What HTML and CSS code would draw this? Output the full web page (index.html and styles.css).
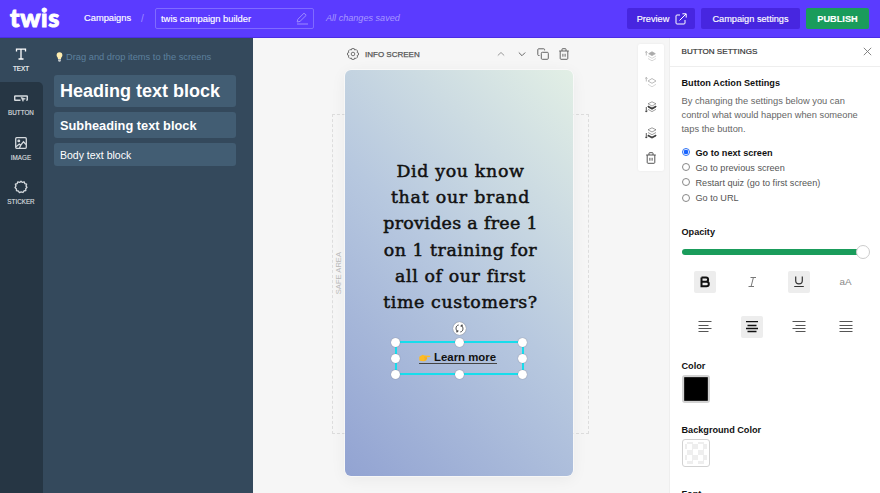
FILE: index.html
```
<!DOCTYPE html>
<html lang="en">
<head>
<meta charset="utf-8">
<title>twis campaign builder</title>
<link rel="stylesheet" href="styles.css">
</head>
<body>
<header class="topbar">
  <div class="logo">twis</div>
  <a class="crumb">Campaigns</a>
  <span class="slash">/</span>
  <div class="name-field"><span>twis campaign builder</span>
    <svg width="12" height="13" viewBox="0 0 12 13" fill="none" stroke="currentColor"><path d="M1.2 10 1.8 7.3 8 1.2 10.2 3.3 4 9.4ZM1 12H12"/></svg>
  </div>
  <em class="saved">All changes saved</em>
  <div class="actions">
    <button class="btn preview">Preview
      <svg width="12" height="12" viewBox="0 0 12 12" fill="none" stroke="currentColor"><path d="M5 2H2Q1 2 1 3V10Q1 11 2 11H9Q10 11 10 10V7M4.5 7.5 11 1M7.4.8H11.2V4.6"/></svg>
    </button>
    <button class="btn campaign">Campaign settings</button>
    <button class="btn publish">PUBLISH</button>
  </div>
</header>
<main class="workspace">
  <nav class="rail">
    <a class="tab active"><svg width="14" height="14" viewBox="0 0 14 14" fill="none" stroke="currentColor" stroke-width="1.3"><path d="M2.5 4.5V2.2H11.5V4.5M7 2.2V12M4.5 12H9.5"/></svg><span>TEXT</span></a>
    <a class="tab"><svg width="14" height="14" viewBox="0 0 14 14" fill="none" stroke="currentColor" stroke-width="1.5"><path d="M6.5 9.2H1.2Q.7 9.2.7 8.7V5.5Q.7 5 1.2 5H12.8Q13.3 5 13.3 5.5V8.7Q13.3 9.2 12.3 9.2"/><path d="M7 6.2 11.4 7.8 9.6 8.5 9 10.4Z" fill="currentColor" stroke-width=".6"/></svg><span>BUTTON</span></a>
    <a class="tab"><svg width="14" height="14" viewBox="0 0 14 14" fill="none" stroke="currentColor" stroke-width="1.3"><rect x="1.7" y="1.7" width="10.6" height="10.6" rx="1"/><circle cx="4.8" cy="4.9" r=".8"/><path d="M2 10.8 5.3 8 6.7 9.2 9.5 5.7 12 8.5M5.5 12 6.7 9.2"/></svg><span>IMAGE</span></a>
    <a class="tab"><svg width="14" height="14" viewBox="0 0 14 14" fill="none" stroke="currentColor" stroke-width="1.3" stroke-linejoin="round"><path d="M7 1.2 8.4 2.4 10.2 1.8 10.8 3.6 12.6 4.2 12 6 13 7.3 11.7 8.7 11.8 10.5 10 10.9 9 12.5 7.2 11.8 5.4 12.6 4.3 11 2.5 10.7 2.4 8.9 1 7.6 2 6 1.4 4.2 3.2 3.6 3.8 1.8 5.6 2.4Z"/></svg><span>STICKER</span></a>
  </nav>
  <aside class="blocks">
    <p class="hint"><svg width="7" height="10" viewBox="0 0 7 10"><path d="M3.5.3A3 3 0 0 0 .6 3.3C.6 4.8 1.9 5.3 2 7H5C5.1 5.3 6.4 4.8 6.4 3.3A3 3 0 0 0 3.5.3Z" fill="#ffedb0"/><path d="M2.1 7.3H4.9V9L4 9.7H3L2.1 9Z" fill="#c3c8cb"/></svg><span>Drag and drop items to the screens</span></p>
    <div class="block heading"><span>Heading text block</span></div>
    <div class="block subheading"><span>Subheading text block</span></div>
    <div class="block body"><span>Body text block</span></div>
  </aside>
  <section class="canvas">
    <div class="screen-bar">
      <svg class="gear" width="12" height="12" viewBox="0 0 12 12" fill="none" stroke="currentColor" stroke-width=".9" stroke-linejoin="round"><path d="M4.8.6H7.2L7.6 2 9.2 1.5 10.6 3 10.1 4.5 11.5 5V7L10.1 7.5 10.6 9 9.1 10.5 7.6 10 7.2 11.4H4.8L4.4 10 2.9 10.5 1.4 9 1.9 7.5.5 7V5L1.9 4.5 1.4 3 2.9 1.5 4.4 2Z"/><circle cx="6" cy="6" r="1.8"/></svg>
      <span class="screen-name">INFO SCREEN</span>
      <div class="screen-tools">
        <svg class="faint" width="12" height="12" viewBox="0 0 12 12" fill="none" stroke="currentColor"><path d="M2.8 7.5 6 4.5 9.2 7.5"/></svg>
        <svg width="12" height="12" viewBox="0 0 12 12" fill="none" stroke="currentColor"><path d="M2.8 4.5 6 7.7 9.2 4.5"/></svg>
        <svg width="12" height="12" viewBox="0 0 12 12" fill="none" stroke="currentColor"><rect x="4.3" y="4.3" width="7" height="7" rx="1"/><path d="M2.5 7.5H1.6Q.8 7.5.8 6.7V1.6Q.8.8 1.6.8H6.8Q7.6.8 7.6 1.6V2.4"/></svg>
        <svg width="12" height="12" viewBox="0 0 12 12" fill="none" stroke="currentColor"><path d="M1.2 3H10.8M4 3V1.2Q4 .7 4.5.7H7.5Q8 .7 8 1.2V3M2.2 3V10.4Q2.2 11.3 3 11.3H9Q9.8 11.3 9.8 10.4V3M4.9 5.8V8.7M7.1 5.8V8.7"/></svg>
      </div>
    </div>
    <div class="safe-area"><span>SAFE AREA</span></div>
    <div class="phone">
      <div class="question"><div class="l1">Did you know</div><div class="l2">that our brand</div><div class="l3">provides a free 1</div><div class="l4">on 1 training for</div><div class="l5">all of our first</div><div class="l6">time customers?</div></div>
      <div class="selection">
        <svg width="12" height="8" viewBox="0 0 12 8"><path d="M.3 2.8 3.6.8 5.8 1.5 11 1.7Q12 2.3 11 3.1L7.6 3.3 8.3 4.2 7.8 5.2 7.1 6.6 5 7.3 2 6.9.3 6.6Z" fill="#fdbb25"/><path d="M5 3.2H8M5.7 4.5H8M5.3 5.8H7.4" stroke="#e09a2c" stroke-width=".4"/></svg>
        <span class="learn">Learn more</span>
        <i class="rotate"><svg width="9" height="9" viewBox="0 0 9 9" fill="none" stroke="#333" stroke-width=".9"><path d="M3.7 1C.5 1.4.3 5.8 2.5 7.5M1 7.8H2.8V6M5.3 8C8.5 7.6 8.7 3.2 6.5 1.5M8 1.2H6.2V3"/></svg></i>
        <i class="handle tl"></i><i class="handle tc"></i><i class="handle tr"></i><i class="handle ml"></i><i class="handle mr"></i><i class="handle bl"></i><i class="handle bc"></i><i class="handle br"></i>
      </div>
    </div>
    <div class="layer-tools">
      <svg class="off" width="12" height="12" viewBox="0 0 12 12" fill="none" stroke="currentColor" stroke-width=".8"><path d="M1.3 5.5V1.5M.2 2.7 1.3 1.3 2.4 2.7"/><path d="M7 1.8 10.3 3.7 7 5.6 3.7 3.7Z" fill="currentColor"/><path d="M3 6 7 8.3 11 6M3 8.5 7 10.8 11 8.5" opacity=".6"/></svg>
      <svg class="off" width="12" height="12" viewBox="0 0 12 12" fill="none" stroke="currentColor" stroke-width=".8"><path d="M1.3 5.5V1.5M.2 2.7 1.3 1.3 2.4 2.7"/><path d="M7 2.5 11 5 7 7.3 3 5Z"/><path d="M3 8.3 7 10.8 11 8.3" opacity=".6"/></svg>
      <svg width="12" height="12" viewBox="0 0 12 12" fill="none" stroke="currentColor" stroke-width=".8"><path d="M1.3 6V11M.2 9.7 1.3 11.1 2.4 9.7"/><path d="M7 .8 11 2.8 7 5 3 2.8Z" opacity=".55"/><path d="M3 5 7 7 11 5V6L7 8.3 3 6Z" fill="currentColor"/><path d="M3 8.3 7 10.6 11 8.3" opacity=".6"/></svg>
      <svg width="12" height="12" viewBox="0 0 12 12" fill="none" stroke="currentColor" stroke-width=".8"><path d="M1.3 6V11M.2 9.7 1.3 11.1 2.4 9.7"/><path d="M7 .8 11 2.8 7 5 3 2.8ZM3 5.5 7 7.7 11 5.5" opacity=".6"/><path d="M3 8 7 10 11 8V8.9L7 11.1 3 8.9Z" fill="currentColor"/></svg>
      <svg class="bin" width="12" height="12" viewBox="0 0 12 12" fill="none" stroke="currentColor"><path d="M1.2 3H10.8M4 3V1.2Q4 .7 4.5.7H7.5Q8 .7 8 1.2V3M2.2 3V10.4Q2.2 11.3 3 11.3H9Q9.8 11.3 9.8 10.4V3M4.9 5.8V8.7M7.1 5.8V8.7"/></svg>
    </div>
  </section>
  <aside class="settings">
    <div class="settings-head"><span>BUTTON SETTINGS</span><svg width="9" height="9" viewBox="0 0 9 9" stroke="currentColor" stroke-width=".9"><path d="M.8.8 8.2 8.2M8.2.8.8 8.2"/></svg></div>
    <div class="settings-body">
      <h3>Button Action Settings</h3>
      <p class="desc"><span>By changing the settings below you can</span><br><span>control what would happen when someone</span><br><span>taps the button.</span></p>
      <ul class="radios">
        <li class="on"><i></i><span>Go to next screen</span></li>
        <li><i></i><span>Go to previous screen</span></li>
        <li><i></i><span>Restart quiz (go to first screen)</span></li>
        <li><i></i><span>Go to URL</span></li>
      </ul>
      <h3 class="opacity-title">Opacity</h3>
      <div class="slider"><i></i></div>
      <div class="formats">
        <b class="tool on"><svg width="12" height="12" viewBox="0 0 12 12" fill="none" stroke="#111" stroke-width="2"><path d="M2.5 1.6V10.2H7.5Q9.8 10.2 9.8 7.9 9.8 5.8 7.5 5.8H2.5M2.5 1.6H7Q9.1 1.6 9.1 3.7 9.1 5.8 7 5.8"/></svg></b>
        <b class="tool"><svg width="12" height="12" viewBox="0 0 12 12" fill="none" stroke="#777"><path d="M4.5 1.5H10M2.5 10.5H8M7.4 1.5 5.1 10.5"/></svg></b>
        <b class="tool on"><svg width="12" height="12" viewBox="0 0 12 12" fill="none" stroke="#333"><path d="M2.7.5V4.7Q2.7 7.8 6 7.8 9.3 7.8 9.3 4.7V.5M1.2 10.5H10.8" stroke-width="1.2"/></svg></b>
        <b class="tool case">aA</b>
        <b class="tool"><svg width="14" height="12" viewBox="0 0 14 12" stroke="#555"><path d="M.5 .5H13.5M.5 4.5H10.5M.5 7.5H13.5M.5 10.5H10.5"/></svg></b>
        <b class="tool on"><svg width="14" height="12" viewBox="0 0 14 12" stroke="#111" stroke-width="1.3"><path d="M1 .5H13M2.5 4.5H11.5M1 7.5H13M2.5 10.5H11.5"/></svg></b>
        <b class="tool"><svg width="14" height="12" viewBox="0 0 14 12" stroke="#555"><path d="M.5 .5H13.5M3.5 4.5H13.5M.5 7.5H13.5M3.5 10.5H13.5"/></svg></b>
        <b class="tool"><svg width="14" height="12" viewBox="0 0 14 12" stroke="#555"><path d="M.5 .5H13.5M.5 4.5H13.5M.5 7.5H13.5M.5 10.5H13.5"/></svg></b>
      </div>
      <h3 class="swatch-title">Color</h3>
      <div class="swatch black"></div>
      <h3 class="swatch-title second">Background Color</h3>
      <div class="swatch clear"></div>
      <h3 class="font-title">Font</h3>
    </div>
  </aside>
</main>
</body>
</html>
```
FILE: styles.css
```
* { box-sizing: border-box; }
html, body { margin: 0; height: 493px; overflow: hidden; }
body { font-family: "Liberation Sans", Arial, sans-serif; font-size: 9.3px; color: #222; background: #f6f6f6; }
svg { display: block; flex: none; }
h3, p, ul { margin: 0; padding: 0; }
span { white-space: nowrap; }

.topbar { height: 38px; background: #5b3bff; border-bottom: 1px solid #4a2de6; display: flex; align-items: center; color: #fff; padding-right: 11px; }
.logo { font: 900 25px/30px Lato, sans-serif; width: 74px; padding-left: 10px; letter-spacing: .7px; -webkit-text-stroke: 1px #fff; margin-top: -3px; }
.crumb { width: 67px; padding-left: 10px; font-size: 9.3px; margin-top: -2px; -webkit-text-stroke: .15px #fff; }
.slash { width: 14px; color: #9d8aff; font-size: 10px; }
.name-field { width: 159px; height: 21px; border: 1px solid #806bff; border-radius: 2px; display: flex; align-items: center; justify-content: space-between; padding: 0 5px; font-size: 9.4px; -webkit-text-stroke: .15px #fff; }
.name-field svg { color: #9d8aff; }
.saved { margin: -1px 0 0 12px; color: #a797ff; font-size: 9.1px; }
.actions { margin-left: auto; display: flex; gap: 6px; }
.btn { font: 9.2px "Liberation Sans", Arial, sans-serif; -webkit-text-stroke: .15px #fff; color: #fff; border: 0; border-radius: 2px; height: 21px; padding: 0; background: #4726e0; display: flex; align-items: center; justify-content: center; }
.preview { width: 68px; gap: 6px; padding-left: 2px; }
.campaign { width: 99px; }
.publish { width: 63px; background: #1a9c5b; font-weight: bold; }

.workspace { height: 455px; display: flex; }
.rail { width: 43px; background: #34495c; display: flex; flex-direction: column; }
.tab { height: 44.6px; background: #263644; color: #d5dade; display: flex; flex-direction: column; align-items: center; padding: 9px 1px 0 0; gap: 4px; font-size: 6.3px; line-height: 8px; }
.tab span { -webkit-text-stroke: .15px currentColor; }
.tab:last-child { flex: 1; }
.tab.active { background: #34495c; color: #fff; height: 44px; }
.tab.active + .tab { border-top-right-radius: 5px; }
.blocks { width: 210px; background: #34495c; padding: 13px 17px 0 11px; }
.hint { display: flex; align-items: center; gap: 3px; height: 11px; margin: 0 0 13px 2px; color: #5c809d; font-size: 9.3px; }
.block { background: #425d73; border-radius: 3px; color: #fff; display: flex; align-items: center; padding-left: 6px; margin-bottom: 5px; }
.heading { height: 32px; font: bold 18px/20px "Liberation Sans", sans-serif; }
.subheading { height: 26px; font-size: 12.8px; font-weight: bold; }
.body { height: 23px; font-size: 10.5px; }

.canvas { width: 416px; background: #f6f6f6; position: relative; }
.screen-bar { display: flex; align-items: center; height: 12px; margin: 10px 99px 0 94px; color: #666; }
.screen-name { margin-left: 6px; font-size: 8px; color: #555; -webkit-text-stroke: .25px #555; }
.screen-tools { display: flex; gap: 9px; margin-left: auto; }
.screen-tools .faint { color: #999; }
.safe-area { position: absolute; left: 79px; top: 76px; width: 257px; height: 320px; border: 1px dashed #ddd; }
.safe-area span { position: absolute; left: 1px; top: 137px; writing-mode: vertical-rl; transform: rotate(180deg); font-size: 7.6px; line-height: 9px; color: #bbb; }
.phone { position: absolute; left: 92px; top: 32px; width: 228px; height: 406px; border-radius: 6px; background: linear-gradient(45deg, #92a3d2 0%, #b7c8df 50%, #e2efe5 100%); box-shadow: 0 0 0 .5px #fff, 0 3px 16px rgba(0,0,0,.06); }
.question { padding-top: 88px; text-align: center; font: 17.4px/26.2px "DejaVu Serif", serif; color: #111; -webkit-text-stroke: .5px #111; white-space: nowrap; padding-left: 3px; }
.l1 { letter-spacing: .65px; }
.l2 { letter-spacing: .75px; }
.l3 { letter-spacing: .33px; }
.l4 { letter-spacing: .5px; }
.l5 { letter-spacing: .6px; }
.l6 { letter-spacing: .6px; }
.selection { position: absolute; left: 50px; top: 271px; width: 129px; height: 34px; border: 2px solid #17ddec; display: flex; align-items: center; padding-left: 22px; gap: 3px; color: #111; font: bold 11.4px/13px "Liberation Sans", sans-serif; }
.selection::after { content: ""; position: absolute; left: 22px; top: 20px; width: 78px; height: 1px; background: #444; }
.learn { margin-top: -2px; }
.rotate { position: absolute; left: 56px; top: -21px; width: 13px; height: 13px; border-radius: 50%; background: #fff; box-shadow: 0 0 1px #555; display: flex; align-items: center; justify-content: center; }
.handle { position: absolute; width: 9px; height: 9px; border-radius: 50%; background: #fff; box-shadow: 0 0 1px #667; }
.tl, .tc, .tr { top: -5px; } .ml, .mr { top: 11px; } .bl, .bc, .br { bottom: -6px; }
.tl, .ml, .bl { left: -6px; } .tc, .bc { left: 58px; } .tr, .mr, .br { right: -5px; }
.layer-tools { position: absolute; left: 385px; top: 6px; width: 26px; height: 127px; border-radius: 2px; background: #fff; box-shadow: 0 0 2px #e5e5e5; display: flex; flex-direction: column; align-items: center; gap: 13.5px; padding-top: 6px; color: #333; }
.layer-tools .off { color: #aaa; }
.layer-tools .bin { color: #555; }

.settings { width: 211px; background: #fff; border-left: 1px solid #eee; }
.settings-head { height: 29px; border-bottom: 1px solid #eee; padding: 0 8px 2px 11.5px; display: flex; align-items: center; justify-content: space-between; font-size: 8.1px; color: #333; -webkit-text-stroke: .2px #333; }
.settings-head svg { color: #777; }
.settings-body { padding: 10px 10px 0 11.5px; }
h3 { font-size: 9.15px; line-height: 12px; color: #111; font-weight: bold; }
.desc { margin-top: 5px; line-height: 14px; font-size: 9.3px; color: #666; }
.radios { list-style: none; margin-top: 9px; color: #555; }
.radios li { height: 15.2px; display: flex; align-items: center; gap: 6px; font-size: 9.15px; }
.radios i { width: 8px; height: 8px; border: 1px solid #888; border-radius: 50%; margin-top: -1px; }
.radios .on { color: #111; font-weight: bold; }
.radios .on i { border-color: #2b70f5; background: radial-gradient(circle, #1763ff 0 2px, #fff 2.6px); }
.opacity-title { margin-top: 20px; }
.slider { width: 181px; height: 6px; background: #1a9c5b; border-radius: 3px; margin-top: 11px; position: relative; }
.slider i { position: absolute; left: 174px; top: -4px; width: 14px; height: 14px; border-radius: 50%; background: #fff; border: 1px solid #ccc; }
.formats { display: grid; grid-template-columns: repeat(4, 47px); grid-auto-rows: 22px; row-gap: 23px; margin: 16px 0 0 -.5px; justify-items: center; }
.tool { width: 22px; height: 22px; border-radius: 2px; display: flex; align-items: center; justify-content: center; }
.tool.on { background: #ededed; }
.case { font-weight: normal; font-size: 9.8px; color: #888; }
.swatch-title { margin-top: 22px; }
.swatch { width: 28px; height: 28px; margin-top: 3px; border: 2px solid #d2d2d2; border-radius: 3px; }
.black { background: #000; box-shadow: inset 0 0 0 1px #222; }
.clear { border-width: 1px; background: conic-gradient(#eee 25%, #fff 0 50%, #eee 0 75%, #fff 0) 2px 2px / 11px 11px content-box; padding: 2px; }
.second { margin-top: 21px; }
.font-title { margin-top: 21px; }
```
